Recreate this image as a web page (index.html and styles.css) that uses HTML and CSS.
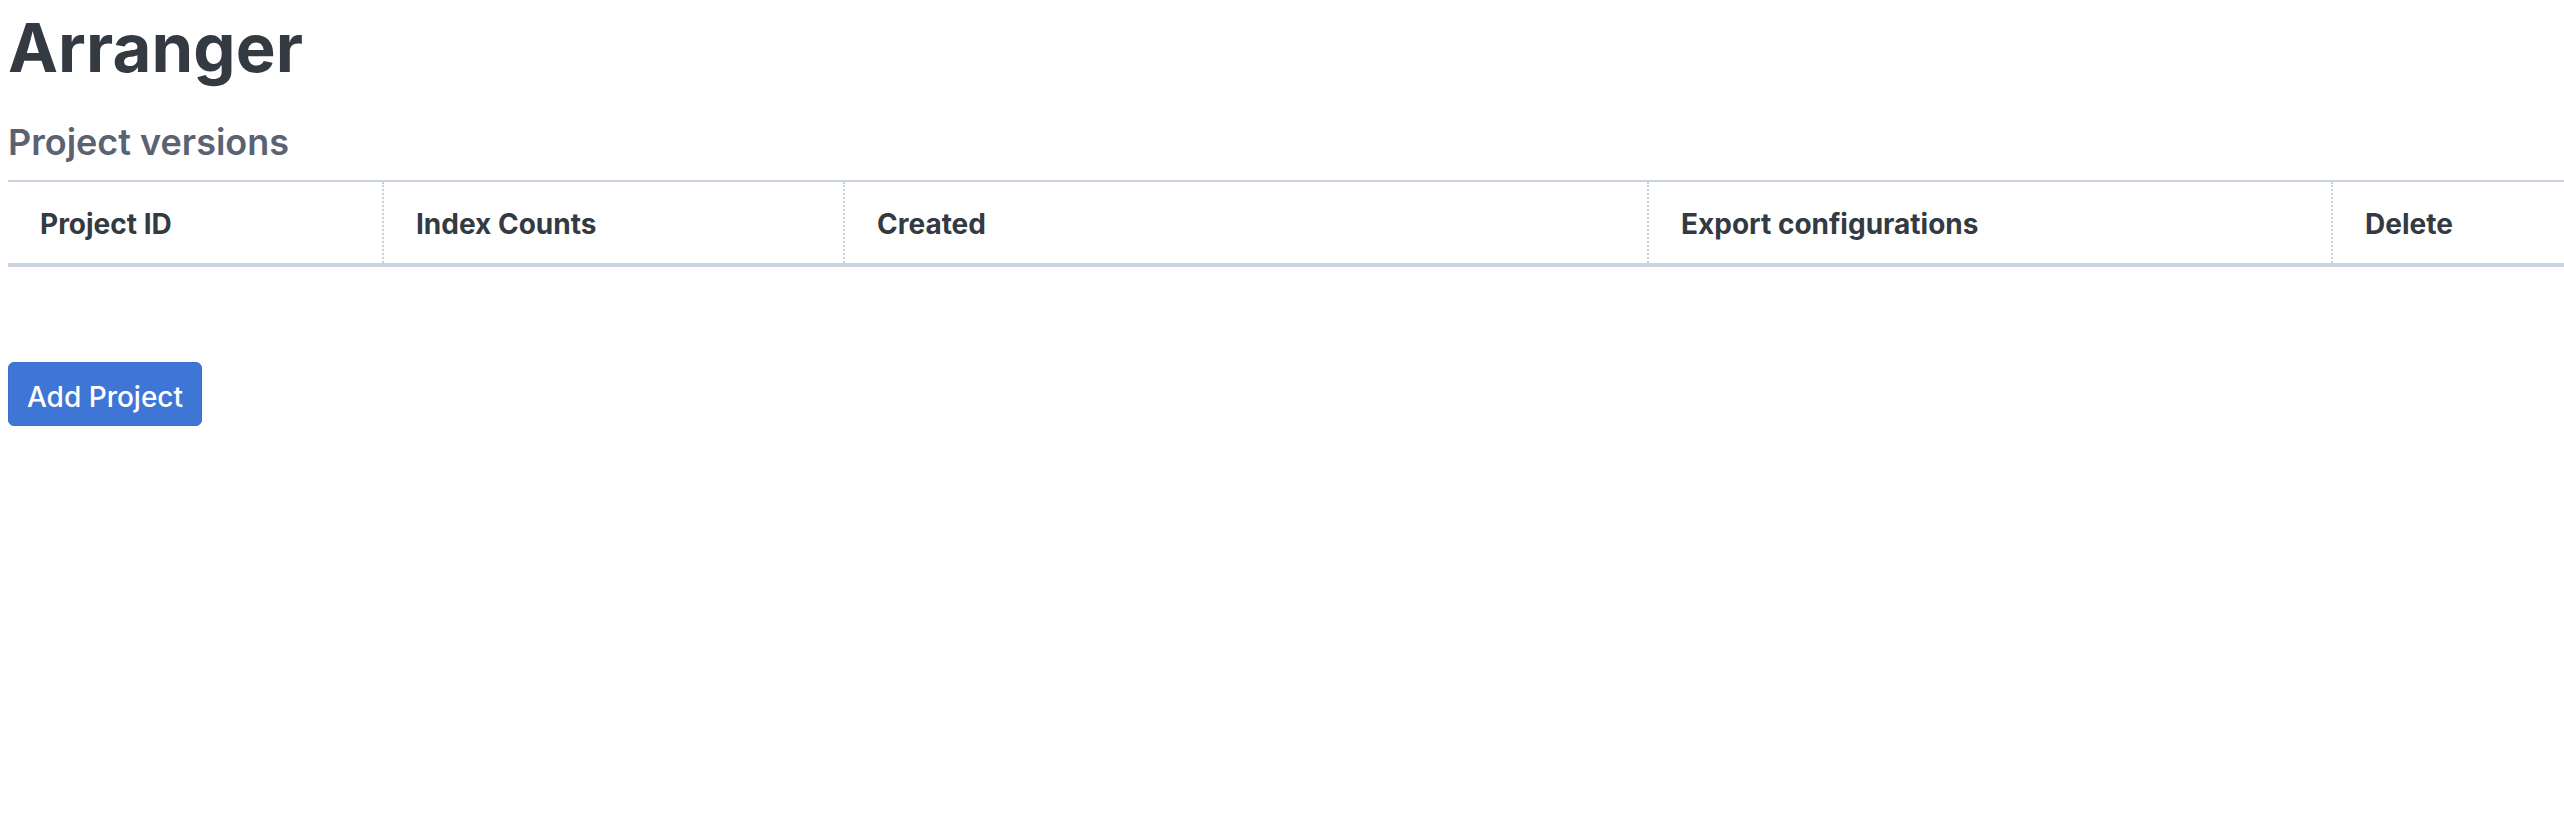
FILE: index.html
```html
<!DOCTYPE html>
<html lang="en">
<head>
<meta charset="utf-8">
<title>Arranger</title>
<link rel="stylesheet" href="styles.css">
</head>
<body>
  <h1 class="title">Arranger</h1>
  <h2 class="subtitle">Project versions</h2>
  <table class="versions">
    <colgroup>
      <col class="c-id">
      <col class="c-index">
      <col class="c-created">
      <col class="c-export">
      <col class="c-delete">
    </colgroup>
    <thead>
      <tr>
        <th>Project ID</th>
        <th>Index Counts</th>
        <th>Created</th>
        <th>Export configurations</th>
        <th>Delete</th>
      </tr>
    </thead>
    <tbody></tbody>
  </table>
  <div class="actions">
    <button class="btn-primary" type="button">Add Project</button>
  </div>
</body>
</html>
```

FILE: styles.css
```css
html, body {
  background: #ffffff;
}
body {
  margin: 8px 0 0 8px;
  font-family: Inter, "Noto Sans", "Liberation Sans", sans-serif;
  color: #343a42;
  overflow-x: hidden;
}
.title {
  margin: 0;
  font-size: 67px;
  line-height: 1.2;
  font-weight: 700;
  color: #343a42;
  letter-spacing: 0.1px;
}
.subtitle {
  margin: 33px 0 0 0;
  font-size: 36px;
  line-height: 1.2;
  font-weight: 600;
  color: #5b6373;
}
.versions {
  margin-top: 15px;
  width: 100%;
  border-collapse: collapse;
  table-layout: fixed;
}
.c-id { width: 375px; }
.c-index { width: 461px; }
.c-created { width: 804px; }
.c-export { width: 684px; }
.c-delete { width: 232px; }
.versions thead tr {
  border-top: 2px solid #cad3e0;
  border-bottom: 4px solid #cad3e0;
}
.versions th {
  text-align: left;
  font-size: 28px;
  line-height: 1.2;
  font-weight: 650;
  color: #343a42;
  padding: 26px 32px 22px 32px;
  white-space: nowrap;
}
.versions th + th {
  border-left: 2px dotted #c8cfdf;
}
.actions {
  margin-top: 95px;
}
.btn-primary {
  font-family: inherit;
  font-size: 28px;
  font-weight: 500;
  line-height: 1.2;
  color: #ffffff;
  background: #3f76d5;
  border: 1px solid #3a6fcc;
  border-radius: 6px;
  padding: 18px 16px 12px;
  width: 194px;
  height: 64px;
  cursor: pointer;
}
```
